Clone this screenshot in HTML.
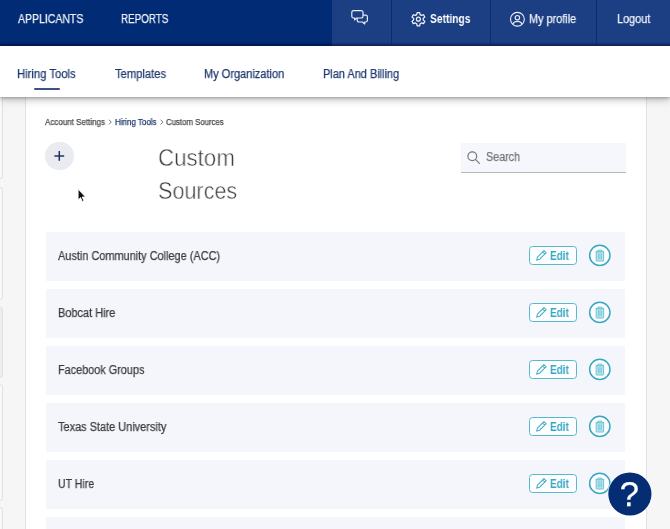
<!DOCTYPE html>
<html><head><meta charset="utf-8">
<style>
*{box-sizing:border-box;margin:0;padding:0}
html,body{width:670px;height:529px;overflow:hidden;background:#f6f6f6;font-family:"Liberation Sans",sans-serif;}
body{position:relative}
.a{position:absolute}
.t{position:absolute;white-space:nowrap;transform-origin:0 0;will-change:transform}
#nav{left:0;top:0;width:670px;height:46px;background:#012b75}
#navg{left:0;top:42px;width:670px;height:4px;background:linear-gradient(rgba(0,5,40,0),rgba(0,5,40,.45))}
#navr{left:332px;top:0;width:338px;height:46px;background:#1c3f84}
.sep{top:0;width:1.3px;height:46px;background:#0a2c78}
#sub{left:0;top:46px;width:670px;height:51px;background:#fff;box-shadow:0 1px 3px rgba(0,0,0,.26),0 3px 6px rgba(0,0,0,.15),0 5px 10px rgba(0,0,0,.07)}
#panel{left:25px;top:97px;width:622px;height:432px;background:#fff;border-left:1px solid #e3e3e3;border-right:1px solid #e3e3e3}
.card{left:-10px;width:13px;background:#f9f9f9;border:1px solid #e1e1e1;border-radius:3px}
.row{left:45.5px;width:579px;height:49px;background:#f4f6fc}
.edit{left:529px;width:48px;height:19px;border:1.2px solid #56b9cd;border-radius:3.5px;background:#fdfeff}
</style></head><body>
<div id="nav" class="a"></div>
<div id="navr" class="a"></div>
<div id="navg" class="a"></div>
<div class="a sep" style="left:391px"></div>
<div class="a sep" style="left:490px"></div>
<div class="a sep" style="left:596px"></div>
<div class="a card" style="top:90px;height:89px"></div>
<div class="a card" style="top:187px;height:113px"></div>
<div class="a card" style="top:307px;height:71px;background:#eceef3"></div>
<div class="a card" style="top:384px;height:117px"></div>
<div class="a card" style="top:507px;height:40px"></div>
<div id="panel" class="a"></div>
<div id="sub" class="a"></div>
<div class="a" style="left:34px;top:88.2px;width:25.5px;height:1.6px;background:#3a5384;border-radius:1px"></div>
<div class="a" style="left:45px;top:141.7px;width:28.5px;height:28.5px;border-radius:50%;background:#e9ebf1"></div>
<div class="a" style="left:461px;top:143px;width:165px;height:29.5px;background:#f6f7fd;border-bottom:1.2px solid #b9b9b9"></div>
<div class="a row" style="top:231.7px"></div>
<div class="a edit" style="top:246.2px"></div>
<svg class="a" style="left:534px;top:249.0px" width="14" height="14" viewBox="0 0 14 14"><g transform="translate(7.1 6.6) rotate(45)" fill="none" stroke="#45aec6" stroke-width="1"><path d="M-1.5 -5.6 h3 v9.2 l-1.5 2.6 l-1.5 -2.6z M-1.5 -3.6h3"/></g></svg>
<svg class="a" style="left:587px;top:243.0px" width="26" height="26" viewBox="0 0 26 26"><circle cx="12.8" cy="12.4" r="10.15" fill="#fcfdff" stroke="#3ba6be" stroke-width="1.5"/><path d="M8.6 8.4h8.6M10.9 8.2v-1.1h3.9v1.1" fill="none" stroke="#6cc3d4" stroke-width="1"/><path d="M9.2 8.8h7.4v8.6a.6.6 0 0 1-.6.6h-6.2a.6.6 0 0 1-.6-.6z" fill="#bfe6ee" stroke="#6cc3d4" stroke-width="1"/><path d="M11.4 10.3v6M12.9 10.3v6M14.4 10.3v6" stroke="#6cc3d4" stroke-width=".8"/></svg>
<div class="a row" style="top:288.7px"></div>
<div class="a edit" style="top:303.2px"></div>
<svg class="a" style="left:534px;top:306.0px" width="14" height="14" viewBox="0 0 14 14"><g transform="translate(7.1 6.6) rotate(45)" fill="none" stroke="#45aec6" stroke-width="1"><path d="M-1.5 -5.6 h3 v9.2 l-1.5 2.6 l-1.5 -2.6z M-1.5 -3.6h3"/></g></svg>
<svg class="a" style="left:587px;top:300.0px" width="26" height="26" viewBox="0 0 26 26"><circle cx="12.8" cy="12.4" r="10.15" fill="#fcfdff" stroke="#3ba6be" stroke-width="1.5"/><path d="M8.6 8.4h8.6M10.9 8.2v-1.1h3.9v1.1" fill="none" stroke="#6cc3d4" stroke-width="1"/><path d="M9.2 8.8h7.4v8.6a.6.6 0 0 1-.6.6h-6.2a.6.6 0 0 1-.6-.6z" fill="#bfe6ee" stroke="#6cc3d4" stroke-width="1"/><path d="M11.4 10.3v6M12.9 10.3v6M14.4 10.3v6" stroke="#6cc3d4" stroke-width=".8"/></svg>
<div class="a row" style="top:345.7px"></div>
<div class="a edit" style="top:360.2px"></div>
<svg class="a" style="left:534px;top:363.0px" width="14" height="14" viewBox="0 0 14 14"><g transform="translate(7.1 6.6) rotate(45)" fill="none" stroke="#45aec6" stroke-width="1"><path d="M-1.5 -5.6 h3 v9.2 l-1.5 2.6 l-1.5 -2.6z M-1.5 -3.6h3"/></g></svg>
<svg class="a" style="left:587px;top:357.0px" width="26" height="26" viewBox="0 0 26 26"><circle cx="12.8" cy="12.4" r="10.15" fill="#fcfdff" stroke="#3ba6be" stroke-width="1.5"/><path d="M8.6 8.4h8.6M10.9 8.2v-1.1h3.9v1.1" fill="none" stroke="#6cc3d4" stroke-width="1"/><path d="M9.2 8.8h7.4v8.6a.6.6 0 0 1-.6.6h-6.2a.6.6 0 0 1-.6-.6z" fill="#bfe6ee" stroke="#6cc3d4" stroke-width="1"/><path d="M11.4 10.3v6M12.9 10.3v6M14.4 10.3v6" stroke="#6cc3d4" stroke-width=".8"/></svg>
<div class="a row" style="top:402.7px"></div>
<div class="a edit" style="top:417.2px"></div>
<svg class="a" style="left:534px;top:420.0px" width="14" height="14" viewBox="0 0 14 14"><g transform="translate(7.1 6.6) rotate(45)" fill="none" stroke="#45aec6" stroke-width="1"><path d="M-1.5 -5.6 h3 v9.2 l-1.5 2.6 l-1.5 -2.6z M-1.5 -3.6h3"/></g></svg>
<svg class="a" style="left:587px;top:414.0px" width="26" height="26" viewBox="0 0 26 26"><circle cx="12.8" cy="12.4" r="10.15" fill="#fcfdff" stroke="#3ba6be" stroke-width="1.5"/><path d="M8.6 8.4h8.6M10.9 8.2v-1.1h3.9v1.1" fill="none" stroke="#6cc3d4" stroke-width="1"/><path d="M9.2 8.8h7.4v8.6a.6.6 0 0 1-.6.6h-6.2a.6.6 0 0 1-.6-.6z" fill="#bfe6ee" stroke="#6cc3d4" stroke-width="1"/><path d="M11.4 10.3v6M12.9 10.3v6M14.4 10.3v6" stroke="#6cc3d4" stroke-width=".8"/></svg>
<div class="a row" style="top:459.7px"></div>
<div class="a edit" style="top:474.2px"></div>
<svg class="a" style="left:534px;top:477.0px" width="14" height="14" viewBox="0 0 14 14"><g transform="translate(7.1 6.6) rotate(45)" fill="none" stroke="#45aec6" stroke-width="1"><path d="M-1.5 -5.6 h3 v9.2 l-1.5 2.6 l-1.5 -2.6z M-1.5 -3.6h3"/></g></svg>
<svg class="a" style="left:587px;top:471.0px" width="26" height="26" viewBox="0 0 26 26"><circle cx="12.8" cy="12.4" r="10.15" fill="#fcfdff" stroke="#3ba6be" stroke-width="1.5"/><path d="M8.6 8.4h8.6M10.9 8.2v-1.1h3.9v1.1" fill="none" stroke="#6cc3d4" stroke-width="1"/><path d="M9.2 8.8h7.4v8.6a.6.6 0 0 1-.6.6h-6.2a.6.6 0 0 1-.6-.6z" fill="#bfe6ee" stroke="#6cc3d4" stroke-width="1"/><path d="M11.4 10.3v6M12.9 10.3v6M14.4 10.3v6" stroke="#6cc3d4" stroke-width=".8"/></svg>
<div class="a row" style="top:516.7px"></div>
<div class="t" style="left:17.50px;top:12.04px;font-size:12px;line-height:14px;font-weight:normal;color:#eef1f8;transform:scaleX(0.8743);-webkit-text-stroke:0.25px currentColor;">APPLICANTS</div>
<div class="t" style="left:120.90px;top:12.04px;font-size:12px;line-height:14px;font-weight:normal;color:#eef1f8;transform:scaleX(0.8185);-webkit-text-stroke:0.25px currentColor;">REPORTS</div>
<div class="t" style="left:429.70px;top:12.14px;font-size:12px;line-height:14px;font-weight:bold;color:#ffffff;transform:scaleX(0.8539);">Settings</div>
<div class="t" style="left:529.00px;top:12.14px;font-size:12px;line-height:14px;font-weight:normal;color:#eef1f8;transform:scaleX(0.9075);-webkit-text-stroke:0.25px currentColor;">My profile</div>
<div class="t" style="left:616.80px;top:12.14px;font-size:12px;line-height:14px;font-weight:normal;color:#eef1f8;transform:scaleX(0.9072);-webkit-text-stroke:0.25px currentColor;">Logout</div>
<div class="t" style="left:17.30px;top:66.74px;font-size:12px;line-height:14px;font-weight:normal;color:#1f3a6e;transform:scaleX(0.9380);-webkit-text-stroke:0.25px currentColor;">Hiring Tools</div>
<div class="t" style="left:115.00px;top:66.74px;font-size:12px;line-height:14px;font-weight:normal;color:#1f3a6e;transform:scaleX(0.9325);-webkit-text-stroke:0.25px currentColor;">Templates</div>
<div class="t" style="left:204.40px;top:66.74px;font-size:12px;line-height:14px;font-weight:normal;color:#1f3a6e;transform:scaleX(0.9182);-webkit-text-stroke:0.25px currentColor;">My Organization</div>
<div class="t" style="left:322.90px;top:66.74px;font-size:12px;line-height:14px;font-weight:normal;color:#1f3a6e;transform:scaleX(0.9127);-webkit-text-stroke:0.25px currentColor;">Plan And Billing</div>
<div class="t" style="left:45.10px;top:117.05px;font-size:8.5px;line-height:10px;font-weight:normal;color:#4a4a4a;transform:scaleX(0.9412);-webkit-text-stroke:0.25px currentColor;">Account Settings</div>
<div class="t" style="left:115.00px;top:117.05px;font-size:8.5px;line-height:10px;font-weight:normal;color:#1f3a6e;transform:scaleX(0.9376);-webkit-text-stroke:0.25px currentColor;">Hiring Tools</div>
<div class="t" style="left:166.30px;top:117.05px;font-size:8.5px;line-height:10px;font-weight:normal;color:#4a4a4a;transform:scaleX(0.9188);-webkit-text-stroke:0.25px currentColor;">Custom Sources</div>
<div class="t" style="left:157.75px;top:143.86px;font-size:23.5px;line-height:28px;font-weight:normal;color:#404040;transform:scaleX(0.9485);-webkit-text-stroke:0.45px #fff;">Custom</div>
<div class="t" style="left:157.78px;top:177.16px;font-size:23.5px;line-height:28px;font-weight:normal;color:#404040;transform:scaleX(0.9176);-webkit-text-stroke:0.45px #fff;">Sources</div>
<div class="t" style="left:485.70px;top:149.74px;font-size:12px;line-height:14px;font-weight:normal;color:#757575;transform:scaleX(0.8970);-webkit-text-stroke:0.25px currentColor;">Search</div>
<div class="t" style="left:57.90px;top:248.74px;font-size:12px;line-height:14px;font-weight:normal;color:#3c3c3c;transform:scaleX(0.9104);-webkit-text-stroke:0.25px currentColor;">Austin Community College (ACC)</div>
<div class="t" style="left:550.00px;top:248.54px;font-size:12px;line-height:14px;font-weight:bold;color:#35a7c2;transform:scaleX(0.8294);">Edit</div>
<div class="t" style="left:57.90px;top:305.74px;font-size:12px;line-height:14px;font-weight:normal;color:#3c3c3c;transform:scaleX(0.9140);-webkit-text-stroke:0.25px currentColor;">Bobcat Hire</div>
<div class="t" style="left:550.00px;top:305.54px;font-size:12px;line-height:14px;font-weight:bold;color:#35a7c2;transform:scaleX(0.8294);">Edit</div>
<div class="t" style="left:57.90px;top:362.74px;font-size:12px;line-height:14px;font-weight:normal;color:#3c3c3c;transform:scaleX(0.9058);-webkit-text-stroke:0.25px currentColor;">Facebook Groups</div>
<div class="t" style="left:550.00px;top:362.54px;font-size:12px;line-height:14px;font-weight:bold;color:#35a7c2;transform:scaleX(0.8294);">Edit</div>
<div class="t" style="left:57.90px;top:419.74px;font-size:12px;line-height:14px;font-weight:normal;color:#3c3c3c;transform:scaleX(0.9123);-webkit-text-stroke:0.25px currentColor;">Texas State University</div>
<div class="t" style="left:550.00px;top:419.54px;font-size:12px;line-height:14px;font-weight:bold;color:#35a7c2;transform:scaleX(0.8294);">Edit</div>
<div class="t" style="left:57.90px;top:476.74px;font-size:12px;line-height:14px;font-weight:normal;color:#3c3c3c;transform:scaleX(0.8786);-webkit-text-stroke:0.25px currentColor;">UT Hire</div>
<div class="t" style="left:550.00px;top:476.54px;font-size:12px;line-height:14px;font-weight:bold;color:#35a7c2;transform:scaleX(0.8294);">Edit</div>
<svg class="a" style="left:0;top:0" width="670" height="529" viewBox="0 0 670 529">
<!-- chat -->
<g fill="none" stroke="#e9edf6" stroke-width="1.2" stroke-linejoin="round">
<path d="M353.6 10.6h7.6a1.8 1.8 0 0 1 1.8 1.8v3.8a1.8 1.8 0 0 1-1.8 1.8h-4.4l-2.2 1.9v-1.9h-1a1.8 1.8 0 0 1-1.8-1.8v-3.8a1.8 1.8 0 0 1 1.8-1.8z"/>
<path d="M363 15.2h2.6a1.8 1.8 0 0 1 1.8 1.8v3.2a1.8 1.8 0 0 1-1.8 1.8h-.9v2l-2.3-2h-3.4a1.8 1.8 0 0 1-1.8-1.8v-2.2"/>
</g>
<!-- gear -->
<path d="M416.65 14.63 L417.13 12.52 L419.67 12.52 L420.15 14.63 L421.44 15.37 L423.50 14.73 L424.78 16.94 L423.19 18.41 L423.19 19.89 L424.78 21.36 L423.50 23.57 L421.44 22.93 L420.15 23.67 L419.67 25.78 L417.13 25.78 L416.65 23.67 L415.36 22.93 L413.30 23.57 L412.02 21.36 L413.61 19.89 L413.61 18.41 L412.02 16.94 L413.30 14.73 L415.36 15.37Z" fill="none" stroke="#f2f4fa" stroke-width="1.25" stroke-linejoin="round"/>
<circle cx="418.4" cy="19.15" r="1.95" fill="none" stroke="#f2f4fa" stroke-width="1.2"/>
<!-- profile -->
<g fill="none" stroke="#e9edf6" stroke-width="1.15">
<circle cx="517.4" cy="19.2" r="6.9"/>
<circle cx="517.4" cy="17.7" r="2.2"/>
<path d="M512.6 24.1c1.2-2.2 3-2.7 4.8-2.7s3.6.5 4.8 2.7"/>
</g>
<!-- chevrons -->
<path d="M108.9 119.7l2.4 2.4-2.4 2.4M160.5 119.7l2.4 2.4-2.4 2.4" fill="none" stroke="#666" stroke-width=".9"/>
<!-- plus -->
<path d="M54.4 155.9h9.8M59.3 151v9.8" stroke="#1d3464" stroke-width="1.5" fill="none"/>
<!-- search -->
<g fill="none" stroke="#777" stroke-width="1.2" stroke-linecap="round">
<circle cx="472.3" cy="156.3" r="4.4"/>
<path d="M475.6 159.6l3.8 3.8"/>
</g>
<!-- cursor -->
<path d="M78.2 189.3v10.4l2.4-2.2 1.7 3.9 1.5-.7-1.7-3.8h3.3z" fill="#0a0a14" stroke="#fff" stroke-width=".7" stroke-linejoin="round"/>
<!-- help -->
<circle cx="629.9" cy="494" r="22.6" fill="#fff" opacity=".55"/>
<circle cx="629.9" cy="494" r="21.6" fill="#042d74"/>
<text x="629.4" y="506.3" text-anchor="middle" font-family="Liberation Sans, sans-serif" font-size="34.5" fill="#fff" stroke="#fff" stroke-width=".25">?</text>
</svg>

</body></html>
